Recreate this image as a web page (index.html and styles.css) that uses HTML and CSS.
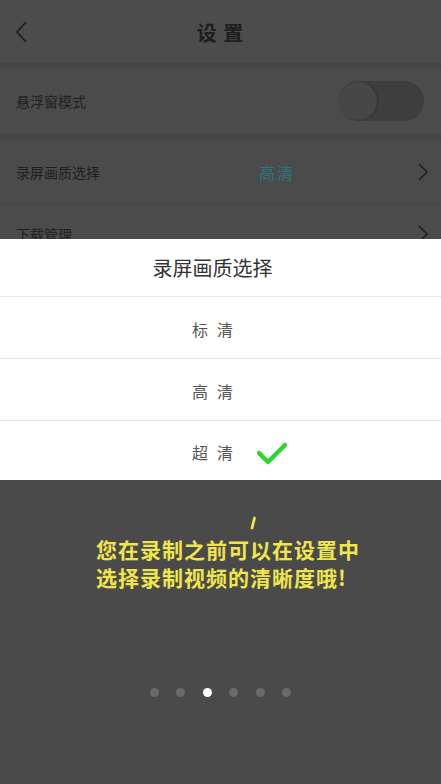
FILE: index.html
```html
<!DOCTYPE html>
<html lang="zh">
<head>
<meta charset="utf-8">
<title>设置</title>
<link rel="stylesheet" href="styles.css">
</head>
<body>
<div class="page">
  <header class="topbar">
    <svg class="back" width="14" height="24" viewBox="0 0 14 24"><path d="M12 2 L3 12 L12 22" fill="none" stroke="#1e1e1e" stroke-width="1.8"/></svg>
    <div class="title">设 置</div>
  </header>
  <div class="gap"></div>
  <div class="row row-1">
    <span class="label">悬浮窗模式</span>
    <span class="toggle"><span class="knob"></span></span>
  </div>
  <div class="gap"></div>
  <div class="row row-2">
    <span class="label">录屏画质选择</span>
    <span class="value">高清</span>
    <svg class="chev" width="12" height="20" viewBox="0 0 12 20"><path d="M2 2 L10 10 L2 18" fill="none" stroke="#1e1e1e" stroke-width="1.6"/></svg>
  </div>
  <div class="row row-3">
    <span class="label">下载管理</span>
    <svg class="chev" width="12" height="20" viewBox="0 0 12 20"><path d="M2 2 L10 10 L2 18" fill="none" stroke="#1e1e1e" stroke-width="1.6"/></svg>
  </div>

  <div class="overlay">
    <div class="sheet">
      <div class="sheet-title">录屏画质选择</div>
      <div class="option"><span>标</span><span>清</span></div>
      <div class="option"><span>高</span><span>清</span></div>
      <div class="option"><span>超</span><span>清</span><svg class="check" width="30" height="24" viewBox="0 0 30 24"><path d="M2 12 L11 21 L28 4" fill="none" stroke="#2fd62f" stroke-width="4.5" stroke-linecap="round" stroke-linejoin="round"/></svg></div>
    </div>
    <div class="tip">
      <svg class="mark" width="8" height="14" viewBox="0 0 8 14"><path d="M5.5 2 L3 12" fill="none" stroke="#f0e64a" stroke-width="2.8" stroke-linecap="round"/></svg>
      <p class="tip-text">您在录制之前可以在设置中<br>选择录制视频的清晰度哦!</p>
    </div>
    <div class="dots">
      <span class="dot"></span>
      <span class="dot"></span>
      <span class="dot active"></span>
      <span class="dot"></span>
      <span class="dot"></span>
      <span class="dot"></span>
    </div>
  </div>
</div>
</body>
</html>
```

FILE: styles.css
```css
* { box-sizing: border-box; }
html, body { margin: 0; padding: 0; }
body {
  background: #4a4a4a;
  font-family: "Noto Sans CJK SC", "Noto Sans", sans-serif;
}
.page {
  position: relative;
  width: 441px;
  height: 784px;
  overflow: hidden;
  background: #4a4a4a;
}
.topbar {
  height: 62px;
  display: flex;
  align-items: center;
  justify-content: center;
  position: relative;
  background: #4c4c4c;
}
.back {
  position: absolute;
  left: 14px;
  top: 20px;
}
.title {
  font-size: 20px;
  font-weight: bold;
  color: #1e1e1e;
  letter-spacing: 1px;
  margin-top: 2px;
}
.gap {
  height: 6px;
  background: linear-gradient(#444, #474747);
}
.row {
  display: flex;
  align-items: center;
  padding: 0 16px;
  background: #4b4b4b;
  position: relative;
}
.row-1 { height: 66px; }
.row-2 { height: 64px; border-bottom: 1px solid #454545; }
.row-3 { height: 60px; }
.label {
  font-size: 14px;
  color: #1f1f1f;
  flex: 1;
}
.value {
  font-size: 16px;
  color: #2a7683;
  letter-spacing: 2px;
  margin-right: 122px;
}
.chev { margin-right: -4px; }
.toggle {
  width: 85px;
  height: 40px;
  border-radius: 20px;
  background: #3e3e3e;
  position: relative;
  margin-right: 1px;
}
.knob {
  position: absolute;
  left: 0;
  top: 1px;
  width: 38px;
  height: 38px;
  border-radius: 50%;
  background: #474747;
  box-shadow: 1px 0 2px rgba(0,0,0,0.2);
}
.overlay {
  position: absolute;
  inset: 0;
  padding-top: 239px;
  display: flex;
  flex-direction: column;
  align-items: stretch;
}
.sheet {
  background: #fff;
}
.sheet-title {
  height: 58px;
  display: flex;
  align-items: center;
  justify-content: center;
  padding-right: 16px;
  font-size: 20px;
  color: #333;
  border-bottom: 1px solid #e8e8e8;
}
.option {
  height: 62px;
  display: flex;
  align-items: center;
  justify-content: center;
  gap: 9px;
  padding: 2px 16px 0 0;
  font-size: 16px;
  color: #555;
  border-bottom: 1px solid #e8e8e8;
  position: relative;
}
.option:last-child {
  border-bottom: none;
  height: 59px;
}
.check {
  position: absolute;
  left: 257px;
  top: 20px;
}
.tip {
  display: flex;
  flex-direction: column;
  align-items: center;
  padding-top: 36px;
}
.mark { margin-left: 64px; }
.tip-text {
  margin: 5px 0 0 0;
  padding-left: 96px;
  align-self: stretch;
  font-size: 21px;
  line-height: 28px;
  font-weight: bold;
  color: #f0e64a;
  letter-spacing: 1px;
}
.dots {
  display: flex;
  justify-content: center;
  gap: 17.5px;
  margin-top: 97px;
}
.dot {
  width: 9px;
  height: 9px;
  border-radius: 50%;
  background: #6a6a6a;
}
.dot.active { background: #fff; }
```
